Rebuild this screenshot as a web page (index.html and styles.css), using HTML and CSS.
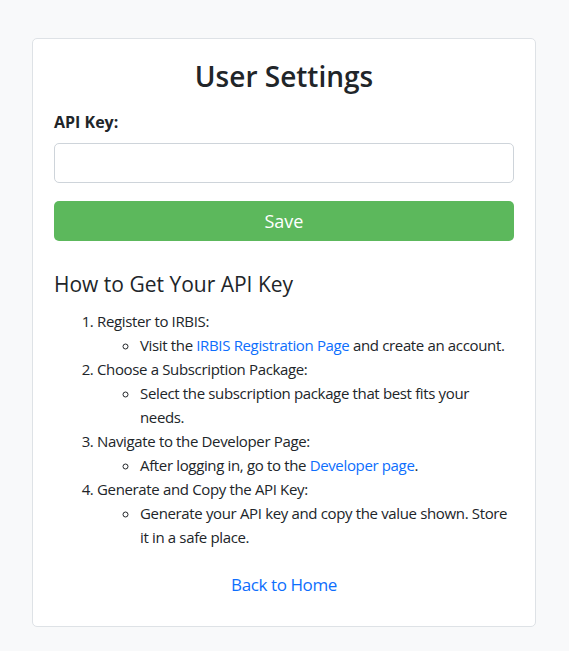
FILE: index.html
```html
<!DOCTYPE html>
<html lang="en">
<head>
<meta charset="utf-8">
<title>User Settings</title>
<link rel="stylesheet" href="styles.css">
</head>
<body>
<div class="card">
  <h2 class="title">User Settings</h2>
  <form class="form">
    <label class="label" for="apiKey">API Key:</label>
    <input class="input" id="apiKey" type="text">
    <button class="btn" type="button">Save</button>
  </form>
  <h4 class="subtitle">How to Get Your API Key</h4>
  <ol class="steps">
    <li>Register to IRBIS:
      <ul class="sub">
        <li>Visit the <a href="#">IRBIS Registration Page</a> and create an account.</li>
      </ul>
    </li>
    <li>Choose a Subscription Package:
      <ul class="sub">
        <li>Select the subscription package that best fits your needs.</li>
      </ul>
    </li>
    <li>Navigate to the Developer Page:
      <ul class="sub">
        <li>After logging in, go to the <a href="#">Developer page</a>.</li>
      </ul>
    </li>
    <li>Generate and Copy the API Key:
      <ul class="sub">
        <li>Generate your API key and copy the value shown. Store it in a safe place.</li>
      </ul>
    </li>
  </ol>
  <p class="back"><a href="#">Back to Home</a></p>
</div>
</body>
</html>
```
FILE: styles.css
```css
* { box-sizing: border-box; }
html, body { margin: 0; padding: 0; }
body {
  background: #f8f9fa;
  font-family: "Open Sans", "Noto Sans", sans-serif;
  font-size: 15px;
  letter-spacing: -0.35px;
  line-height: 24px;
  color: #212529;
}
a { color: #0d6efd; text-decoration: none; }
.card {
  width: 504px;
  margin: 38px 0 24px 32px;
  background: #fff;
  border: 1px solid #dee2e6;
  border-radius: 5px;
  padding: 20px 21px 20px 21px;
}
.title {
  margin: 0;
  font-size: 28px;
  line-height: 34px;
  font-weight: 600;
  letter-spacing: 0;
  text-align: center;
}
.form { display: flex; flex-direction: column; }
.label {
  margin-top: 17px;
  font-size: 16px;
  font-weight: 700;
  letter-spacing: 0;
  line-height: 24px;
}
.input {
  margin-top: 9px;
  height: 40px;
  border: 1px solid #ced4da;
  border-radius: 5px;
  font: inherit;
  padding: 6px 12px;
}
.btn {
  margin-top: 18px;
  height: 40px;
  border: none;
  border-radius: 5px;
  background: #5cb85c;
  color: #fff;
  font-family: inherit;
  font-size: 18px;
  letter-spacing: 0;
  cursor: pointer;
}
.subtitle {
  margin: 31px 0 0;
  font-size: 21px;
  line-height: 25px;
  font-weight: 500;
  letter-spacing: 0;
}
.steps {
  margin: 12px 0 0;
  padding-left: 43px;
}
.sub {
  list-style: circle;
  margin: 0;
  padding-left: 43px;
}
.back {
  margin: 24px 0 9px;
  font-size: 17px;
  letter-spacing: -0.4px;
  text-align: center;
}
```
